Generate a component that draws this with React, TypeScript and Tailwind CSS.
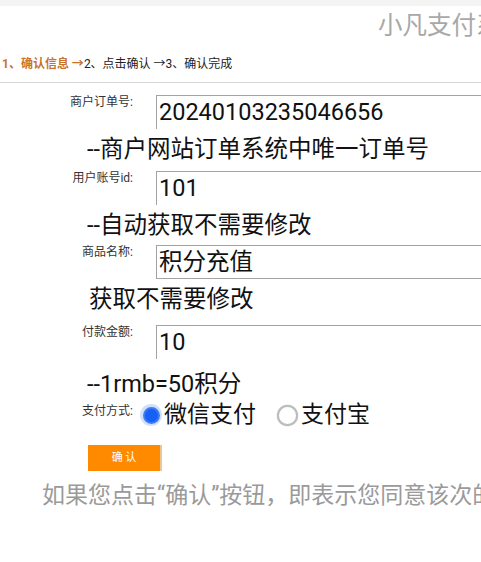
import React from 'react'

const font = { fontFamily: 'Roboto, "Noto Sans CJK SC", sans-serif' }

type RowProps = { label: string; value: string; full?: boolean }

function FieldRow({ label, value, full }: RowProps) {
  return (
    <div className="flex items-start">
      <div className="w-[133px] shrink-0 text-right text-[12px] leading-[14px] text-[#333]">{label}</div>
      <div
        className={
          full
            ? 'ml-[23px] h-[34px] w-[400px] shrink-0 border border-[#a3a3a3] pl-[2px] text-[23.5px] leading-[32px] text-[#111]'
            : 'ml-[23px] h-[34px] w-[400px] shrink-0 border-l border-t border-[#a3a3a3] pl-[2px] text-[23.5px] leading-[32px] text-[#111]'
        }
      >
        {value}
      </div>
    </div>
  )
}

function Hint({ text, indent }: { text: string; indent: string }) {
  return <div className={`${indent} text-[23.5px] leading-[26px] text-[#111]`}>{text}</div>
}

export default function App() {
  return (
    <div className="h-[562px] w-[481px] overflow-hidden bg-white" style={font}>
      {/* top strip */}
      <div className="h-[6px] bg-[#f4f4f4]" />

      {/* site title, cut off at the right */}
      <div className="mt-[6px] whitespace-nowrap pl-[378px] text-[24.5px] leading-[28px] text-[#a8a8a8]">小凡支付系统</div>

      {/* steps */}
      <div className="mt-[16px] flex whitespace-nowrap pl-[2px] text-[12px] font-bold leading-[16px]">
        <span className="text-[#c8722e]">1、确认信息 →</span>
        <span className="font-normal text-[#222]">2、点击确认 →3、确认完成</span>
      </div>
      <div className="mt-[10px] h-px bg-[#d8d8d8]" />

      <div className="mt-[12px]">
        <FieldRow label="商户订单号:" value="20240103235046656" />
        <Hint text="--商户网站订单系统中唯一订单号" indent="mt-[7px] pl-[87px]" />
        <div className="mt-[9px]">
          <FieldRow label="用户账号id:" value="101" />
        </div>
        <Hint text="--自动获取不需要修改" indent="mt-[7px] pl-[87px]" />
        <div className="mt-[7px]">
          <FieldRow label="商品名称:" value="积分充值" full />
        </div>
        <Hint text="获取不需要修改" indent="mt-[7px] pl-[89px]" />
        <div className="mt-[13px]">
          <FieldRow label="付款金额:" value="10" />
        </div>
        <Hint text="--1rmb=50积分" indent="mt-[12px] pl-[87px]" />

        {/* payment method */}
        <div className="mt-[6px] flex items-start">
          <div className="w-[133px] shrink-0 pt-[1px] text-right text-[12px] leading-[14px] text-[#333]">支付方式:</div>
          <div className="ml-[7px] flex items-center text-[23px] leading-[24px] text-[#111]">
            <span className="flex h-[22px] w-[22px] items-center justify-center rounded-full bg-[#cfe0ff]">
              <span className="h-[17px] w-[17px] rounded-full border-[2px] border-[#3d7bf0] bg-[#1660f5]" />
            </span>
            <span className="ml-[2px]">微信支付</span>
            <span className="ml-[21px] flex h-[21px] w-[21px] items-center justify-center rounded-full border-[2px] border-[#bdbdbd] bg-white shadow-[0_0_1px_#999]" />
            <span className="ml-[3px]">支付宝</span>
          </div>
        </div>

        {/* confirm button */}
        <div className="mt-[18px] pl-[88px]">
          <button className="flex h-[26px] w-[74px] items-center justify-center border-r-[2px] border-[#e8c89a] bg-[#ff8a00] text-[11px] text-white">
            确 认
          </button>
        </div>

        <div className="mt-[11px] whitespace-nowrap pl-[42px] text-[23px] leading-[28px] text-[#9a9a9a]">
          如果您点击“确认”按钮，即表示您同意该次的操作
        </div>
      </div>
    </div>
  )
}
